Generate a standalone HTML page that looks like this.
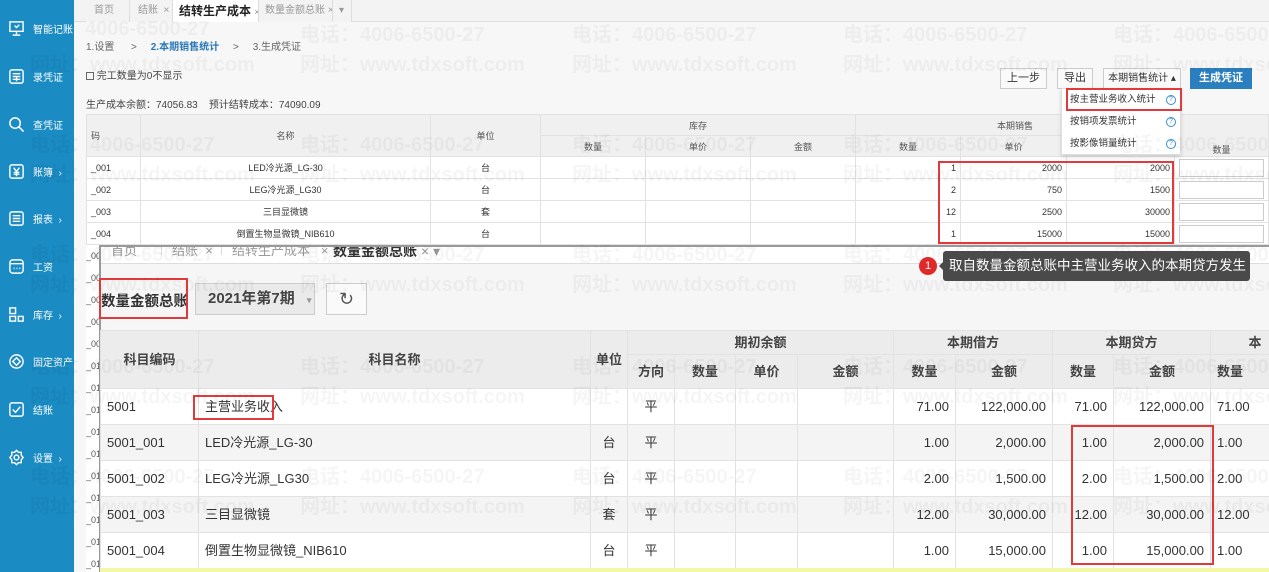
<!DOCTYPE html>
<html><head><meta charset="utf-8"><style>
*{margin:0;padding:0;box-sizing:border-box}
body{width:1269px;height:572px;overflow:hidden;position:relative;background:#f7f7f7;font-family:"Liberation Sans","Noto Sans CJK SC",sans-serif;color:#333;font-size:12px}
.abs{position:absolute}
#side{left:0;top:0;width:74px;height:572px;background:#1a8bc3;color:#fff}
.si{position:absolute;left:8px;font-size:10px;display:flex;align-items:center;white-space:nowrap}
.si svg{width:17px;height:17px;margin-right:8px;flex:none}
.tab{position:absolute;top:0;height:22px;border-right:1px solid #ddd;font-size:10px;color:#999;line-height:22px;padding-left:8px;background:#f3f3f3;white-space:nowrap;overflow:hidden}
table{border-collapse:collapse;table-layout:fixed}
td{border:1px solid #e2e2e2;overflow:hidden;white-space:nowrap}
.t1 td{font-size:9px;height:22px;padding:0 4px}
.t1 .h td{background:#f0f0f0;color:#555;text-align:center;height:21px}
.t2 td{font-size:13px;height:36px;padding:0 6px;line-height:16px}
.t2 .h td{background:#ececec;text-align:center;font-weight:bold;color:#444}
.r{text-align:right}.c{text-align:center}
.wm{position:absolute;font-size:20px;font-weight:bold;color:rgba(0,0,0,0.04);white-space:nowrap;pointer-events:none;z-index:50}
.btn{position:absolute;top:68px;height:21px;border:1px solid #ccc;background:#fafafa;font-size:11px;line-height:19px;text-align:center;color:#333;white-space:nowrap}
.red{position:absolute;border:2px solid #e03a3a;z-index:40}
.q{display:inline-block;width:10px;height:10px;border:1px solid #3a8fd0;border-radius:50%;font-size:7px;line-height:8px;text-align:center;color:#3a8fd0;position:absolute;left:104px;top:6px}
.dd{height:22px;line-height:22px;padding-left:8px;position:relative;white-space:nowrap;font-size:9.5px}
</style></head><body>

<div id="side" class="abs">
 <div class="si" style="top:20px"><svg viewBox="0 0 18 18" fill="none" stroke="#fff" stroke-width="1.5"><rect x="2" y="2" width="14" height="10"/><path d="M9 12v3M5 16h8M7 6l2 2 3-3"/></svg>智能记账</div>
 <div class="si" style="top:68px"><svg viewBox="0 0 18 18" fill="none" stroke="#fff" stroke-width="1.5"><rect x="2" y="2" width="14" height="14" rx="2"/><path d="M5 6h8M5 9h8M5 12h8M9 9v5"/></svg>录凭证</div>
 <div class="si" style="top:116px"><svg viewBox="0 0 18 18" fill="none" stroke="#fff" stroke-width="1.6"><circle cx="7.5" cy="7.5" r="5.5"/><path d="M11.5 11.5l5 5"/></svg>查凭证</div>
 <div class="si" style="top:163px"><svg viewBox="0 0 18 18" fill="none" stroke="#fff" stroke-width="1.5"><rect x="2" y="2" width="14" height="14" rx="2"/><path d="M6 5l3 4 3-4M9 9v5M6 10h6M6 12h6"/></svg>账簿 &nbsp;›</div>
 <div class="si" style="top:210px"><svg viewBox="0 0 18 18" fill="none" stroke="#fff" stroke-width="1.5"><rect x="2" y="2" width="14" height="14" rx="2"/><path d="M5 6h8M5 9h8M5 12h8"/></svg>报表 &nbsp;›</div>
 <div class="si" style="top:258px"><svg viewBox="0 0 18 18" fill="none" stroke="#fff" stroke-width="1.5"><rect x="2" y="2" width="14" height="14" rx="3"/><path d="M2 6h14M6 11h1M9 11h1M12 11h1"/></svg>工资</div>
 <div class="si" style="top:306px"><svg viewBox="0 0 18 18" fill="none" stroke="#fff" stroke-width="1.5"><rect x="2" y="2" width="6" height="6"/><rect x="2" y="11" width="6" height="5"/><rect x="11" y="11" width="5" height="5"/></svg>库存 &nbsp;›</div>
 <div class="si" style="top:353px"><svg viewBox="0 0 18 18" fill="none" stroke="#fff" stroke-width="1.5"><circle cx="9" cy="9" r="7"/><path d="M9 5l4 4-4 4-4-4z"/></svg>固定资产</div>
 <div class="si" style="top:401px"><svg viewBox="0 0 18 18" fill="none" stroke="#fff" stroke-width="1.5"><rect x="2" y="2" width="14" height="14" rx="2"/><path d="M5 9l3 3 5-6"/></svg>结账</div>
 <div class="si" style="top:449px"><svg viewBox="0 0 18 18" fill="none" stroke="#fff" stroke-width="1.5"><path d="M9 1.5l2 2h3v3l2 2.5-2 2.5v3h-3l-2 2-2-2H4v-3L2 9l2-2.5v-3h3z"/><circle cx="9" cy="9" r="2.5"/></svg>设置 &nbsp;›</div>
</div>

<div class="abs" style="left:74px;top:0;width:1195px;height:22px;background:#f3f3f3;border-bottom:1px solid #ddd"></div>
<div class="tab" style="left:86px;width:44px">首页</div>
<div class="tab" style="left:130px;width:43px">结账 &nbsp;×</div>
<div class="tab" style="left:173px;width:86px;background:#fff;color:#222;font-weight:bold;font-size:12px;padding-left:6px">结转生产成本 <span style="font-weight:normal;font-size:9px;color:#888">×</span></div>
<div class="tab" style="left:259px;width:74px;padding-left:6px">数量金额总账 ×</div>
<div class="tab" style="left:333px;width:19px;padding-left:6px">▾</div>

<div class="abs" style="left:86px;top:38px;font-size:10px;color:#666;white-space:nowrap">1.设置 &nbsp;&nbsp;&nbsp;&nbsp;&nbsp;&gt; &nbsp;&nbsp;&nbsp;&nbsp;<b style="color:#2a77b8">2.本期销售统计</b> &nbsp;&nbsp;&nbsp;&nbsp;&gt; &nbsp;&nbsp;&nbsp;&nbsp;3.生成凭证</div>
<div class="abs" style="left:86px;top:67px;font-size:10px;color:#444"><span style="display:inline-block;width:8px;height:8px;border:1px solid #666;vertical-align:-1px"></span> 完工数量为0不显示</div>
<div class="abs" style="left:86px;top:96px;font-size:10px;color:#444">生产成本余额：74056.83 &nbsp;&nbsp;&nbsp;预计结转成本：74090.09</div>

<div class="btn" style="left:1000px;width:47px">上一步</div>
<div class="btn" style="left:1057px;width:36px">导出</div>
<div class="btn" style="left:1103px;width:78px;font-size:10px">本期销售统计 ▴</div>
<div class="btn" style="left:1190px;width:62px;background:#2b7fbf;border-color:#2b7fbf;color:#fff;font-weight:bold">生成凭证</div>

<table class="t1 abs" style="left:86px;top:114px;width:1183px;background:#fff">
<colgroup><col style="width:54px"><col style="width:290px"><col style="width:110px"><col style="width:105px"><col style="width:105px"><col style="width:105px"><col style="width:105px"><col style="width:106px"><col style="width:108px"><col></colgroup>
<tr class="h"><td rowspan="2" style="text-align:left">码</td><td rowspan="2">名称</td><td rowspan="2">单位</td><td colspan="3">库存</td><td colspan="3">本期销售</td><td rowspan="2" style="vertical-align:bottom">数量</td></tr>
<tr class="h"><td>数量</td><td>单价</td><td>金额</td><td>数量</td><td>单价</td><td>金额</td></tr>
<tr><td>_001</td><td class="c">LED冷光源_LG-30</td><td class="c">台</td><td></td><td></td><td></td><td class="r">1</td><td class="r">2000</td><td class="r">2000</td><td><div style="border:1px solid #ccc;height:18px"></div></td></tr>
<tr><td>_002</td><td class="c">LEG冷光源_LG30</td><td class="c">台</td><td></td><td></td><td></td><td class="r">2</td><td class="r">750</td><td class="r">1500</td><td><div style="border:1px solid #ccc;height:18px"></div></td></tr>
<tr><td>_003</td><td class="c">三目显微镜</td><td class="c">套</td><td></td><td></td><td></td><td class="r">12</td><td class="r">2500</td><td class="r">30000</td><td><div style="border:1px solid #ccc;height:18px"></div></td></tr>
<tr><td>_004</td><td class="c">倒置生物显微镜_NIB610</td><td class="c">台</td><td></td><td></td><td></td><td class="r">1</td><td class="r">15000</td><td class="r">15000</td><td><div style="border:1px solid #ccc;height:18px"></div></td></tr>
</table>
<div class="red" style="left:938px;top:161px;width:236px;height:83px"></div>

<div class="abs" style="left:1061px;top:88px;width:120px;height:67px;background:#fff;border:1px solid #ddd;box-shadow:0 2px 4px rgba(0,0,0,.15);z-index:30">
 <div class="dd">按主营业务收入统计<span class="q">?</span></div>
 <div class="dd">按销项发票统计<span class="q">?</span></div>
 <div class="dd">按影像销量统计<span class="q">?</span></div>
</div>
<div class="red" style="left:1066px;top:88px;width:116px;height:23px"></div>

<div class="abs" style="left:86px;top:245px;width:13px;height:327px;background:#fff;font-size:9px;line-height:22px;color:#555;overflow:hidden">_00<br>_00<br>_00<br>_00<br>_00<br>_01<br>_01<br>_01<br>_01<br>_01<br>_01<br>_01<br>_01<br>_01<br>_01</div>

<div class="abs" style="left:99px;top:245px;width:1170px;height:327px;background:#f6f6f6;border-left:2px solid #999;border-top:2px solid #999">
 <div class="abs" style="left:0;top:0;width:1170px;height:17px;background:#fff;border-bottom:1px solid #ddd;font-size:13px;color:#999;line-height:8px;overflow:hidden;white-space:nowrap">
  <span style="position:absolute;left:10px;top:0">首页</span>
  <span style="position:absolute;left:60px;top:0;border-left:1px solid #ddd;padding-left:10px">结账 &nbsp;×</span>
  <span style="position:absolute;left:120px;top:0;border-left:1px solid #ddd;padding-left:10px">结转生产成本 &nbsp;&nbsp;×</span>
  <span style="position:absolute;left:232px;top:0;color:#333;font-weight:bold;font-size:14px">数量金额总账 <span style="font-weight:normal;color:#999">× ▾</span></span>
 </div>
 <div class="abs" style="left:0;top:43px;font-size:14.5px;font-weight:bold;color:#333;white-space:nowrap">数量金额总账</div>
 <div class="abs" style="left:94px;top:36px;width:120px;height:32px;border:1px solid #ccc;background:#eaeaea;font-size:15px;font-weight:bold;line-height:30px;padding-left:12px;color:#444;white-space:nowrap">2021年第7期 <span style="font-size:9px;color:#999;margin-left:8px">▾</span></div>
 <div class="abs" style="left:225px;top:36px;width:41px;height:32px;border:1px solid #ccc;background:#fafafa;font-size:18px;line-height:30px;text-align:center;color:#555">↻</div>
</div>
<div class="red" style="left:99px;top:278px;width:89px;height:41px"></div>

<table class="t2 abs" style="left:100px;top:330px;width:1200px;background:#fff">
<colgroup><col style="width:98px"><col style="width:392px"><col style="width:37px"><col style="width:47px"><col style="width:61px"><col style="width:62px"><col style="width:96px"><col style="width:62px"><col style="width:97px"><col style="width:61px"><col style="width:97px"><col></colgroup>
<tr class="h" style="height:24px"><td rowspan="2">科目编码</td><td rowspan="2">科目名称</td><td rowspan="2" style="padding:0">单位</td><td colspan="4" style="height:24px">期初余额</td><td colspan="2" style="height:24px">本期借方</td><td colspan="2" style="height:24px">本期贷方</td><td style="height:24px">本</td></tr>
<tr class="h" style="height:34px"><td style="height:34px;padding:0">方向</td><td style="height:34px">数量</td><td style="height:34px">单价</td><td style="height:34px">金额</td><td style="height:34px">数量</td><td style="height:34px">金额</td><td style="height:34px">数量</td><td style="height:34px">金额</td><td style="text-align:left;height:34px">数量</td></tr>
<tr><td>5001</td><td>主营业务收入</td><td></td><td class="c">平</td><td></td><td></td><td></td><td class="r">71.00</td><td class="r">122,000.00</td><td class="r">71.00</td><td class="r">122,000.00</td><td>71.00</td></tr>
<tr style="background:#f4f4f4"><td>5001_001</td><td>LED冷光源_LG-30</td><td class="c">台</td><td class="c">平</td><td></td><td></td><td></td><td class="r">1.00</td><td class="r">2,000.00</td><td class="r">1.00</td><td class="r">2,000.00</td><td>1.00</td></tr>
<tr><td>5001_002</td><td>LEG冷光源_LG30</td><td class="c">台</td><td class="c">平</td><td></td><td></td><td></td><td class="r">2.00</td><td class="r">1,500.00</td><td class="r">2.00</td><td class="r">1,500.00</td><td>2.00</td></tr>
<tr style="background:#f4f4f4"><td>5001_003</td><td>三目显微镜</td><td class="c">套</td><td class="c">平</td><td></td><td></td><td></td><td class="r">12.00</td><td class="r">30,000.00</td><td class="r">12.00</td><td class="r">30,000.00</td><td>12.00</td></tr>
<tr><td>5001_004</td><td>倒置生物显微镜_NIB610</td><td class="c">台</td><td class="c">平</td><td></td><td></td><td></td><td class="r">1.00</td><td class="r">15,000.00</td><td class="r">1.00</td><td class="r">15,000.00</td><td>1.00</td></tr>
</table>
<div class="abs" style="left:100px;top:568px;width:1169px;height:4px;background:#f3f7a8"></div>
<div class="red" style="left:193px;top:395px;width:81px;height:25px"></div>
<div class="red" style="left:1071px;top:425px;width:143px;height:140px"></div>

<div class="abs" style="left:919px;top:257px;width:18px;height:18px;border-radius:50%;background:#e02a2a;color:#fff;font-size:11px;text-align:center;line-height:18px;z-index:60">1</div>
<div class="abs" style="left:934px;top:261px;width:0;height:0;border:5px solid transparent;border-right-color:#4a4a4a;z-index:60"></div>
<div class="abs" style="left:943px;top:251px;width:307px;height:30px;background:#4a4a4a;border-radius:3px;color:#fff;font-size:13.5px;line-height:30px;padding-left:6px;z-index:60;white-space:nowrap;overflow:hidden">取自数量金额总账中主营业务收入的本期贷方发生</div>

<div class="wm" style="left:85px;top:18px">4006-6500-27</div>
<div class="wm" style="left:300px;top:18px">电话：4006-6500-27</div><div class="wm" style="left:572px;top:18px">电话：4006-6500-27</div><div class="wm" style="left:843px;top:18px">电话：4006-6500-27</div><div class="wm" style="left:1113px;top:18px">电话：4006-6500-27</div>
<div class="wm" style="left:30px;top:48px">网址：www.tdxsoft.com</div><div class="wm" style="left:300px;top:48px">网址：www.tdxsoft.com</div><div class="wm" style="left:572px;top:48px">网址：www.tdxsoft.com</div><div class="wm" style="left:843px;top:48px">网址：www.tdxsoft.com</div><div class="wm" style="left:1113px;top:48px">网址：www.tdxsoft.com</div>
<div class="wm" style="left:30px;top:128px">电话：4006-6500-27</div><div class="wm" style="left:300px;top:128px">电话：4006-6500-27</div><div class="wm" style="left:572px;top:128px">电话：4006-6500-27</div><div class="wm" style="left:843px;top:128px">电话：4006-6500-27</div><div class="wm" style="left:1113px;top:128px">电话：4006-6500-27</div>
<div class="wm" style="left:30px;top:158px">网址：www.tdxsoft.com</div><div class="wm" style="left:300px;top:158px">网址：www.tdxsoft.com</div><div class="wm" style="left:572px;top:158px">网址：www.tdxsoft.com</div><div class="wm" style="left:843px;top:158px">网址：www.tdxsoft.com</div><div class="wm" style="left:1113px;top:158px">网址：www.tdxsoft.com</div>
<div class="wm" style="left:30px;top:238px">电话：4006-6500-27</div><div class="wm" style="left:300px;top:238px">电话：4006-6500-27</div><div class="wm" style="left:572px;top:238px">电话：4006-6500-27</div><div class="wm" style="left:843px;top:238px">电话：4006-6500-27</div><div class="wm" style="left:1113px;top:238px">电话：4006-6500-27</div>
<div class="wm" style="left:30px;top:268px">网址：www.tdxsoft.com</div><div class="wm" style="left:300px;top:268px">网址：www.tdxsoft.com</div><div class="wm" style="left:572px;top:268px">网址：www.tdxsoft.com</div><div class="wm" style="left:843px;top:268px">网址：www.tdxsoft.com</div><div class="wm" style="left:1113px;top:268px">网址：www.tdxsoft.com</div>
<div class="wm" style="left:30px;top:350px">电话：4006-6500-27</div><div class="wm" style="left:300px;top:350px">电话：4006-6500-27</div><div class="wm" style="left:572px;top:350px">电话：4006-6500-27</div><div class="wm" style="left:843px;top:350px">电话：4006-6500-27</div><div class="wm" style="left:1113px;top:350px">电话：4006-6500-27</div>
<div class="wm" style="left:30px;top:380px">网址：www.tdxsoft.com</div><div class="wm" style="left:300px;top:380px">网址：www.tdxsoft.com</div><div class="wm" style="left:572px;top:380px">网址：www.tdxsoft.com</div><div class="wm" style="left:843px;top:380px">网址：www.tdxsoft.com</div><div class="wm" style="left:1113px;top:380px">网址：www.tdxsoft.com</div>
<div class="wm" style="left:30px;top:460px">电话：4006-6500-27</div><div class="wm" style="left:300px;top:460px">电话：4006-6500-27</div><div class="wm" style="left:572px;top:460px">电话：4006-6500-27</div><div class="wm" style="left:843px;top:460px">电话：4006-6500-27</div><div class="wm" style="left:1113px;top:460px">电话：4006-6500-27</div>
<div class="wm" style="left:30px;top:490px">网址：www.tdxsoft.com</div><div class="wm" style="left:300px;top:490px">网址：www.tdxsoft.com</div><div class="wm" style="left:572px;top:490px">网址：www.tdxsoft.com</div><div class="wm" style="left:843px;top:490px">网址：www.tdxsoft.com</div><div class="wm" style="left:1113px;top:490px">网址：www.tdxsoft.com</div>
</body></html>
